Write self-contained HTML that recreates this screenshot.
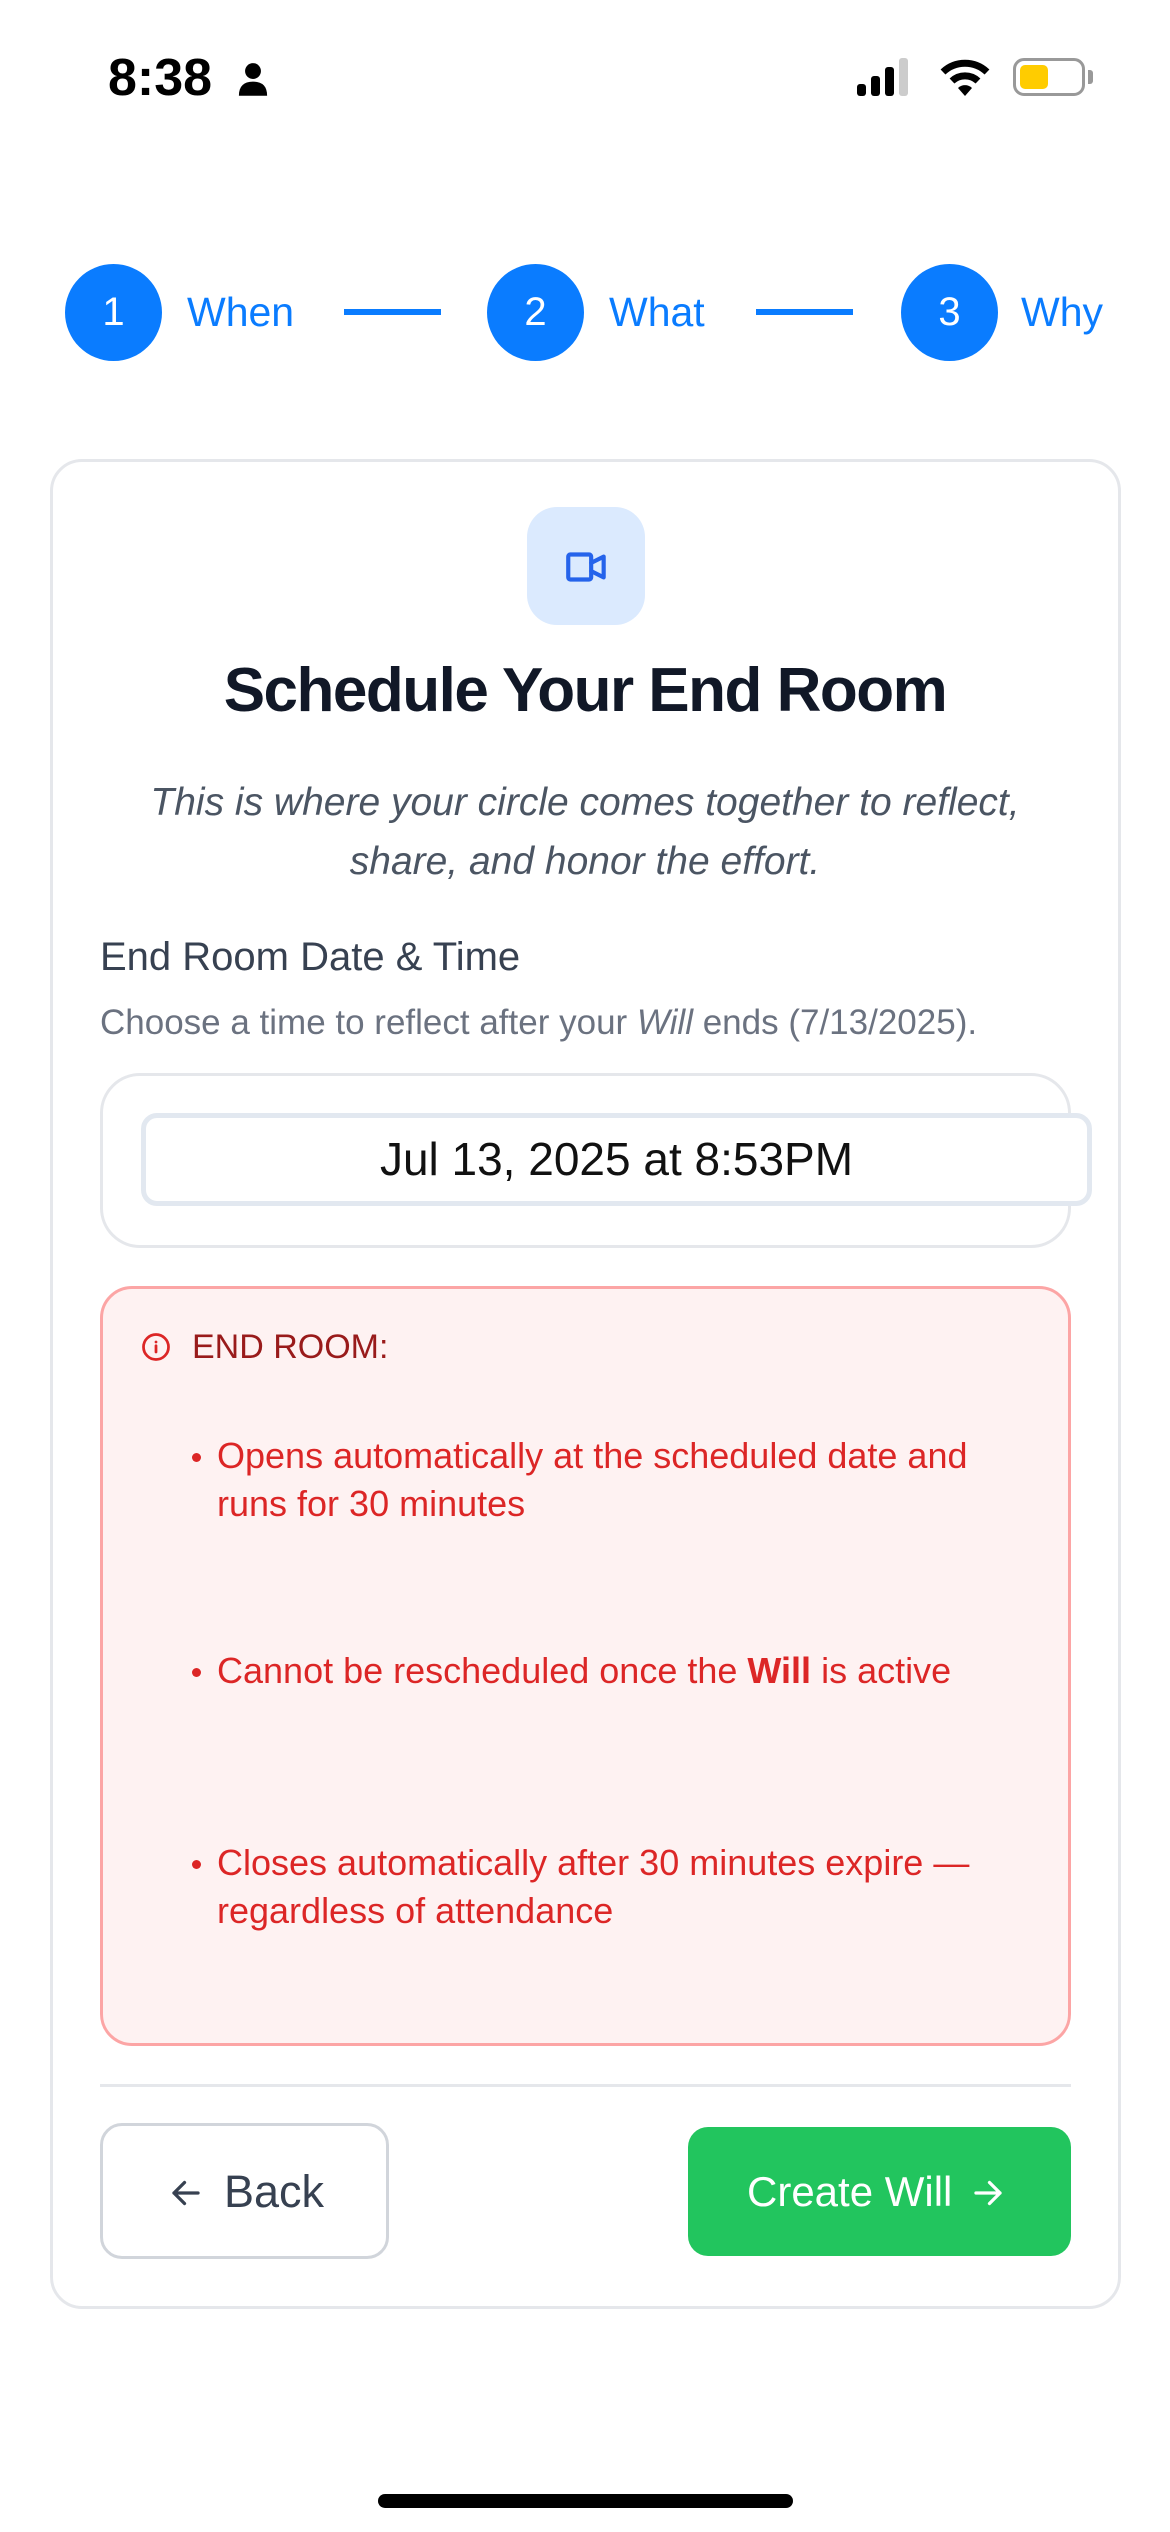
<!DOCTYPE html>
<html><head><meta charset="utf-8"><style>
*{box-sizing:border-box;margin:0;padding:0}
body{width:1170px;height:2532px;background:#fff;font-family:"Liberation Sans",sans-serif;position:relative;overflow:hidden}
.abs{position:absolute}
.circ{position:absolute;width:97px;height:97px;border-radius:50%;background:#0a7cff;color:#fff;font-size:40px;display:flex;align-items:center;justify-content:center;top:264px}
.step{position:absolute;top:288px;font-size:41px;color:#0a7cff;line-height:48px}
.line{position:absolute;top:309px;height:6px;background:#0a7cff}
li{list-style:none;position:absolute;left:217px;width:790px;font-size:36px;line-height:48px;color:#dc2626}
li:before{content:"";position:absolute;left:-25px;top:21px;width:9px;height:9px;border-radius:50%;background:#dc2626}
</style></head><body>
<div class="abs" style="left:108px;top:50px;font-size:52px;font-weight:bold;color:#000;line-height:56px">8:38</div>
<svg class="abs" style="left:238px;top:62px" width="30" height="34" viewBox="0 0 34 38"><circle cx="17" cy="10" r="9" fill="#000"/><path d="M1 38 Q1 22 17 22 Q33 22 33 38Z" fill="#000"/></svg>
<svg class="abs" style="left:857px;top:58px" width="58" height="38" viewBox="0 0 58 38"><rect x="0" y="26" width="9" height="12" rx="3" fill="#000"/><rect x="14" y="18" width="9" height="20" rx="3" fill="#000"/><rect x="28" y="9" width="9" height="29" rx="3" fill="#000"/><rect x="42" y="0" width="9" height="38" rx="3" fill="#ccc"/></svg>
<svg class="abs" style="left:940px;top:58px" width="50" height="40" viewBox="0 0 50 40"><path d="M3 14 A32 32 0 0 1 47 14" stroke="#000" stroke-width="7" fill="none"/><path d="M12 23 A19 19 0 0 1 38 23" stroke="#000" stroke-width="7" fill="none"/><path d="M18 30 L25 38 L32 30 A10 10 0 0 0 18 30Z" fill="#000"/></svg>
<div class="abs" style="left:1013px;top:58px;width:72px;height:38px;border:3px solid #999;border-radius:11px"></div>
<div class="abs" style="left:1088px;top:70px;width:5px;height:14px;background:#999;border-radius:0 3px 3px 0"></div>
<div class="abs" style="left:1020px;top:65px;width:28px;height:24px;background:#ffcc00;border-radius:5px"></div>

<div class="circ" style="left:65px">1</div><div class="step" style="left:187px">When</div>
<div class="line" style="left:344px;width:97px"></div>
<div class="circ" style="left:487px">2</div><div class="step" style="left:609px">What</div>
<div class="line" style="left:756px;width:97px"></div>
<div class="circ" style="left:901px">3</div><div class="step" style="left:1021px">Why</div>

<div class="abs" style="left:50px;top:459px;width:1071px;height:1850px;border:3px solid #e5e7eb;border-radius:32px"></div>
<div class="abs" style="left:527px;top:507px;width:118px;height:118px;background:#dbeafe;border-radius:30px"></div>
<svg class="abs" style="left:562px;top:542px" width="50" height="50" viewBox="0 0 24 24" fill="none" stroke="#2563eb" stroke-width="2" stroke-linecap="round" stroke-linejoin="round"><rect x="3" y="6" width="11" height="12" rx="1"/><path d="M14 10l6-3v10l-6-3"/></svg>
<div class="abs" style="left:0;width:1170px;top:655px;text-align:center;font-size:62px;font-weight:bold;color:#111827;letter-spacing:-1.5px;line-height:72px">Schedule Your End Room</div>
<div class="abs" style="left:105px;width:960px;top:773px;text-align:center;font-size:39px;font-style:italic;color:#4b5563;line-height:59px">This is where your circle comes together to reflect, share, and honor the effort.</div>
<div class="abs" style="left:100px;top:934px;font-size:40px;color:#374151;line-height:46px">End Room Date &amp; Time</div>
<div class="abs" style="left:100px;top:1003px;font-size:35px;color:#6b7280;line-height:40px">Choose a time to reflect after your <i>Will</i> ends (7/13/2025).</div>
<div class="abs" style="left:100px;top:1073px;width:971px;height:175px;border:3px solid #e5e7eb;border-radius:40px"></div>
<div class="abs" style="left:141px;top:1113px;width:951px;height:93px;border:5px solid #e2e8f0;border-radius:16px;background:#fff;text-align:center;font-size:46px;line-height:83px;color:#111">Jul 13, 2025 at 8:53PM</div>

<div class="abs" style="left:100px;top:1286px;width:971px;height:760px;background:#fef2f2;border:3px solid #fca5a5;border-radius:32px"></div>
<svg class="abs" style="left:141px;top:1332px" width="30" height="30" viewBox="0 0 24 24" fill="none" stroke="#dc2626" stroke-width="2.2" stroke-linecap="round"><circle cx="12" cy="12" r="10"/><path d="M12 16v-5M12 8h.01"/></svg>
<div class="abs" style="left:192px;top:1325px;font-size:34px;color:#991b1b;line-height:44px">END ROOM:</div>
<ul>
<li style="top:1432px">Opens automatically at the scheduled date and runs for 30 minutes</li>
<li style="top:1647px">Cannot be rescheduled once the <b>Will</b> is active</li>
<li style="top:1839px">Closes automatically after 30 minutes expire — regardless of attendance</li>
</ul>
<div class="abs" style="left:100px;top:2084px;width:971px;height:3px;background:#e5e7eb"></div>
<div class="abs" style="left:100px;top:2123px;width:289px;height:136px;border:3px solid #d1d5db;border-radius:22px"></div>
<svg class="abs" style="left:168px;top:2175px" width="36" height="36" viewBox="0 0 24 24" fill="none" stroke="#374151" stroke-width="2.2" stroke-linecap="round" stroke-linejoin="round"><path d="M20 12H4M11 5l-7 7 7 7"/></svg>
<div class="abs" style="left:224px;top:2166px;font-size:45px;line-height:52px;color:#374151">Back</div>
<div class="abs" style="left:688px;top:2127px;width:383px;height:129px;background:#22c55e;border-radius:20px"></div>
<div class="abs" style="left:747px;top:2166px;font-size:42px;line-height:52px;color:#fff">Create Will</div>
<svg class="abs" style="left:970px;top:2175px" width="36" height="36" viewBox="0 0 24 24" fill="none" stroke="#fff" stroke-width="2.2" stroke-linecap="round" stroke-linejoin="round"><path d="M4 12h16M13 5l7 7-7 7"/></svg>
<div class="abs" style="left:378px;top:2494px;width:415px;height:14px;background:#000;border-radius:7px"></div>
</body></html>
